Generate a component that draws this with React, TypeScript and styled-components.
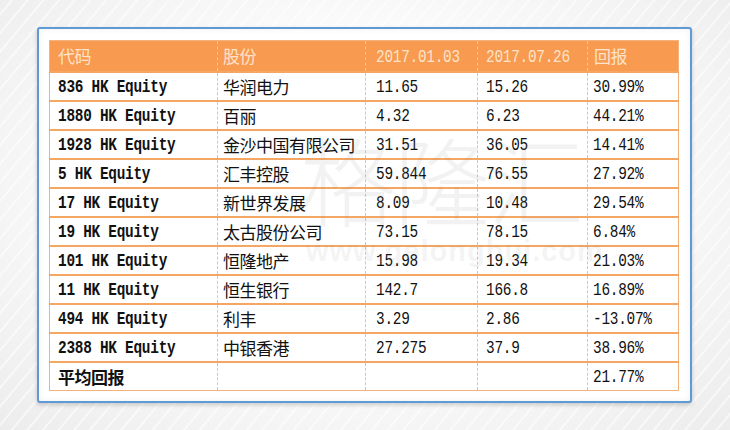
import React from "react";
import styled, { createGlobalStyle } from "styled-components";

const GlobalStyle = createGlobalStyle`
  html, body {
    margin: 0;
    padding: 0;
  }
  body {
    width: 730px;
    height: 430px;
    overflow: hidden;
    background-color: #f3f3f3;
    background-image:
      repeating-linear-gradient(
        -50deg,
        rgba(255, 255, 255, 0) 0px,
        rgba(255, 255, 255, 0) 9px,
        rgba(255, 255, 255, 0.75) 10px,
        rgba(255, 255, 255, 0) 12px
      ),
      radial-gradient(ellipse at 50% 45%, #ffffff 35%, #ececec 100%);
  }
`;

type Row = {
  code: string;
  name: string;
  start: string;
  end: string;
  ret: string;
};

const rows: Row[] = [
  { code: "836 HK Equity", name: "华润电力", start: "11.65", end: "15.26", ret: "30.99%" },
  { code: "1880 HK Equity", name: "百丽", start: "4.32", end: "6.23", ret: "44.21%" },
  { code: "1928 HK Equity", name: "金沙中国有限公司", start: "31.51", end: "36.05", ret: "14.41%" },
  { code: "5 HK Equity", name: "汇丰控股", start: "59.844", end: "76.55", ret: "27.92%" },
  { code: "17 HK Equity", name: "新世界发展", start: "8.09", end: "10.48", ret: "29.54%" },
  { code: "19 HK Equity", name: "太古股份公司", start: "73.15", end: "78.15", ret: "6.84%" },
  { code: "101 HK Equity", name: "恒隆地产", start: "15.98", end: "19.34", ret: "21.03%" },
  { code: "11 HK Equity", name: "恒生银行", start: "142.7", end: "166.8", ret: "16.89%" },
  { code: "494 HK Equity", name: "利丰", start: "3.29", end: "2.86", ret: "-13.07%" },
  { code: "2388 HK Equity", name: "中银香港", start: "27.275", end: "37.9", ret: "38.96%" },
];

const Page = styled.div`
  position: relative;
  padding: 27px 0 0 37px;
`;

const Panel = styled.div`
  position: relative;
  width: 629px;
  height: 350px;
  padding: 11px 12px 11px 10px;
  background: #ffffff;
  border: 2px solid #5f9ad6;
  border-radius: 3px;
  box-shadow: 0 2px 4px rgba(0, 0, 0, 0.18), inset 0 0 6px rgba(0, 0, 0, 0.06);
`;

const Table = styled.table`
  width: 629px;
  border-collapse: collapse;
  table-layout: fixed;
  border: 1px solid #f3b27c;
`;

const HeadRow = styled.tr`
  height: 31px;
  background: #f89a4f;
`;

const BodyRow = styled.tr`
  height: 29px;
  border-top: 2px solid #f6a663;
`;

const Th = styled.th<{ $pad?: number }>`
  padding: 0 0 0 ${(p) => p.$pad ?? 8}px;
  text-align: left;
  font-weight: normal;
  color: #fde3cb;
  border-left: 1px dashed #f9c397;
  white-space: nowrap;
  &:first-child {
    border-left: none;
  }
`;

const Td = styled.td<{ $pad?: number }>`
  padding: 0 0 0 ${(p) => p.$pad ?? 8}px;
  text-align: left;
  color: #111111;
  border-left: 1px dashed #c8c8c8;
  white-space: nowrap;
  &:first-child {
    border-left: none;
  }
`;

const Cjk = styled.span<{ $bold?: boolean }>`
  font-family: "Noto Sans CJK SC", sans-serif;
  font-size: 17px;
  font-weight: ${(p) => (p.$bold ? 700 : 400)};
  letter-spacing: -0.5px;
`;

// SimSun-like half-width glyphs: narrow and tall
const Mono = styled.span<{ $bold?: boolean }>`
  display: inline-block;
  font-family: "Liberation Mono", monospace;
  font-size: 14.4px;
  font-weight: ${(p) => (p.$bold ? 700 : 400)};
  letter-spacing: -0.25px;
  transform: scaleY(1.22);
  transform-origin: 50% 55%;
`;

const Watermark = styled.div`
  position: absolute;
  left: 261px;
  top: 96px;
  display: flex;
  flex-direction: column;
  align-items: flex-start;
  pointer-events: none;
  color: rgba(140, 140, 140, 0.11);
`;

const WatermarkLogo = styled.div`
  font-family: "Noto Sans CJK SC", sans-serif;
  font-size: 96px;
  font-weight: 300;
  line-height: 1.1;
  letter-spacing: -2px;
`;

const WatermarkUrl = styled.div`
  font-family: "Liberation Sans", sans-serif;
  font-size: 29px;
  font-weight: 700;
  letter-spacing: 1px;
  margin: 4px 0 0 6px;
`;

const App: React.FC = () => {
  return (
    <>
      <GlobalStyle />
      <Page>
        <Panel>
          <Table>
            <colgroup>
              <col style={{ width: 168 }} />
              <col style={{ width: 148 }} />
              <col style={{ width: 112 }} />
              <col style={{ width: 110 }} />
              <col style={{ width: 91 }} />
            </colgroup>
            <thead>
              <HeadRow>
                <Th><Cjk>代码</Cjk></Th>
                <Th $pad={5}><Cjk>股份</Cjk></Th>
                <Th $pad={10}><Mono>2017.01.03</Mono></Th>
                <Th $pad={8}><Mono>2017.07.26</Mono></Th>
                <Th $pad={6}><Cjk>回报</Cjk></Th>
              </HeadRow>
            </thead>
            <tbody>
              {rows.map((r) => (
                <BodyRow key={r.code}>
                  <Td><Mono $bold>{r.code}</Mono></Td>
                  <Td $pad={5}><Cjk>{r.name}</Cjk></Td>
                  <Td $pad={10}><Mono>{r.start}</Mono></Td>
                  <Td $pad={8}><Mono>{r.end}</Mono></Td>
                  <Td $pad={5}><Mono>{r.ret}</Mono></Td>
                </BodyRow>
              ))}
              <BodyRow>
                <Td><Cjk $bold>平均回报</Cjk></Td>
                <Td />
                <Td />
                <Td />
                <Td $pad={5}><Mono>21.77%</Mono></Td>
              </BodyRow>
            </tbody>
          </Table>
          <Watermark>
            <WatermarkLogo>格隆汇</WatermarkLogo>
            <WatermarkUrl>www.gelonghui.com</WatermarkUrl>
          </Watermark>
        </Panel>
      </Page>
    </>
  );
};

export default App;
